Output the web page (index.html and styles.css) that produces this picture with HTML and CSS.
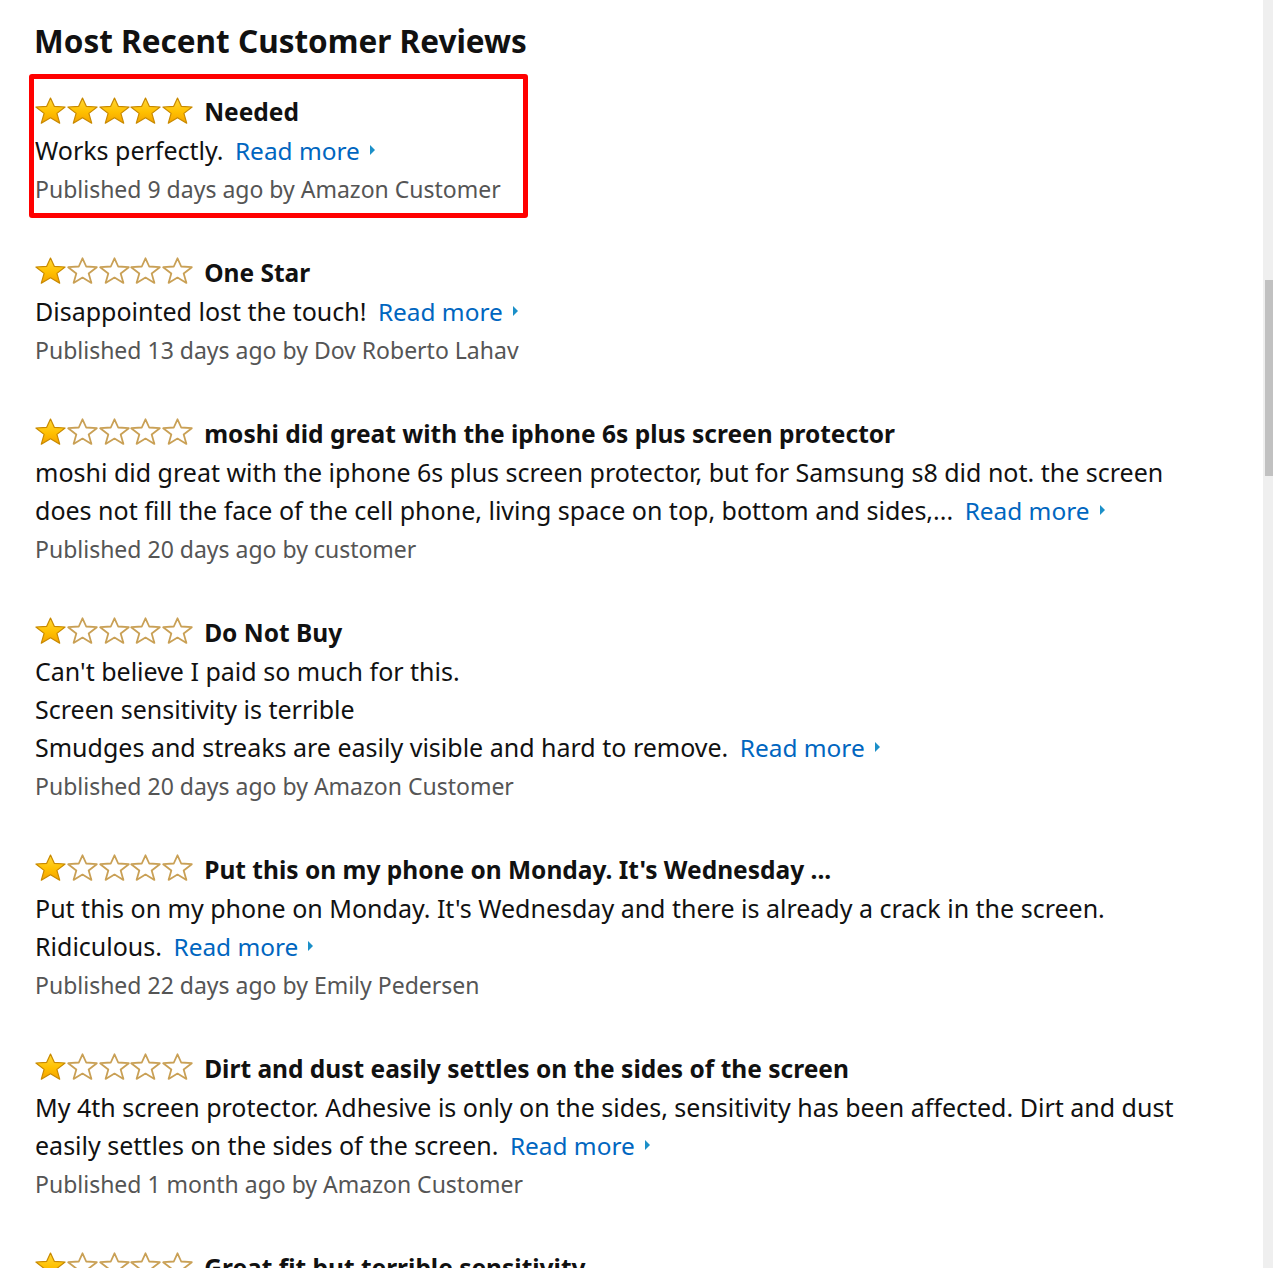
FILE: index.html
```html
<!DOCTYPE html>
<html lang="en">
<head>
<meta charset="utf-8">
<title>Most Recent Customer Reviews</title>
<link rel="stylesheet" href="styles.css">
</head>
<body>
<svg class="defs" width="0" height="0" aria-hidden="true">
  <defs>
    <linearGradient id="gold" x1="0" y1="0" x2="0" y2="1">
      <stop offset="0" stop-color="#ffd83a"/>
      <stop offset="0.55" stop-color="#ffc000"/>
      <stop offset="1" stop-color="#f5a300"/>
    </linearGradient>
    <symbol id="star-full" viewBox="0 0 31 27">
      <path d="M15.5 1 L19.3 9.3 L30.1 10 L21.9 16.4 L24.7 26.2 L15.5 20.7 L6.3 26.2 L9.1 16.4 L0.9 10 L11.7 9.3 Z" fill="url(#gold)" stroke="#c88900" stroke-width="1.2" stroke-linejoin="round"/>
    </symbol>
    <symbol id="star-empty" viewBox="0 0 31 27">
      <path d="M15.5 1.3 L19.2 9.5 L29.8 10.2 L21.7 16.5 L24.4 25.9 L15.5 20.6 L6.6 25.9 L9.3 16.5 L1.2 10.2 L11.8 9.5 Z" fill="#fff" stroke="#c9a055" stroke-width="1.8" stroke-linejoin="round"/>
    </symbol>
  </defs>
</svg>

<main class="page">
  <h2 class="heading">Most Recent Customer Reviews</h2>

  <section class="review review-highlight">
    <div class="review-title-row">
      <span class="stars">
        <svg class="star"><use href="#star-full"/></svg><svg class="star"><use href="#star-full"/></svg><svg class="star"><use href="#star-full"/></svg><svg class="star"><use href="#star-full"/></svg><svg class="star"><use href="#star-full"/></svg>
      </span>
      <span class="review-title">Needed</span>
    </div>
    <p class="review-body">Works perfectly. <a class="read-more" href="#">Read more<span class="caret"></span></a></p>
    <p class="review-meta">Published 9 days ago by Amazon Customer</p>
  </section>

  <section class="review">
    <div class="review-title-row">
      <span class="stars">
        <svg class="star"><use href="#star-full"/></svg><svg class="star"><use href="#star-empty"/></svg><svg class="star"><use href="#star-empty"/></svg><svg class="star"><use href="#star-empty"/></svg><svg class="star"><use href="#star-empty"/></svg>
      </span>
      <span class="review-title">One Star</span>
    </div>
    <p class="review-body">Disappointed lost the touch! <a class="read-more" href="#">Read more<span class="caret"></span></a></p>
    <p class="review-meta">Published 13 days ago by Dov Roberto Lahav</p>
  </section>

  <section class="review">
    <div class="review-title-row">
      <span class="stars">
        <svg class="star"><use href="#star-full"/></svg><svg class="star"><use href="#star-empty"/></svg><svg class="star"><use href="#star-empty"/></svg><svg class="star"><use href="#star-empty"/></svg><svg class="star"><use href="#star-empty"/></svg>
      </span>
      <span class="review-title">moshi did great with the iphone 6s plus screen protector</span>
    </div>
    <p class="review-body">moshi did great with the iphone 6s plus screen protector, but for Samsung s8 did not. the screen does not fill the face of the cell phone, living space on top, bottom and sides,... <a class="read-more" href="#">Read more<span class="caret"></span></a></p>
    <p class="review-meta">Published 20 days ago by customer</p>
  </section>

  <section class="review">
    <div class="review-title-row">
      <span class="stars">
        <svg class="star"><use href="#star-full"/></svg><svg class="star"><use href="#star-empty"/></svg><svg class="star"><use href="#star-empty"/></svg><svg class="star"><use href="#star-empty"/></svg><svg class="star"><use href="#star-empty"/></svg>
      </span>
      <span class="review-title">Do Not Buy</span>
    </div>
    <p class="review-body">Can't believe I paid so much for this.<br>Screen sensitivity is terrible<br>Smudges and streaks are easily visible and hard to remove. <a class="read-more" href="#">Read more<span class="caret"></span></a></p>
    <p class="review-meta">Published 20 days ago by Amazon Customer</p>
  </section>

  <section class="review">
    <div class="review-title-row">
      <span class="stars">
        <svg class="star"><use href="#star-full"/></svg><svg class="star"><use href="#star-empty"/></svg><svg class="star"><use href="#star-empty"/></svg><svg class="star"><use href="#star-empty"/></svg><svg class="star"><use href="#star-empty"/></svg>
      </span>
      <span class="review-title">Put this on my phone on Monday. It's Wednesday ...</span>
    </div>
    <p class="review-body">Put this on my phone on Monday. It's Wednesday and there is already a crack in the screen. Ridiculous. <a class="read-more" href="#">Read more<span class="caret"></span></a></p>
    <p class="review-meta">Published 22 days ago by Emily Pedersen</p>
  </section>

  <section class="review">
    <div class="review-title-row">
      <span class="stars">
        <svg class="star"><use href="#star-full"/></svg><svg class="star"><use href="#star-empty"/></svg><svg class="star"><use href="#star-empty"/></svg><svg class="star"><use href="#star-empty"/></svg><svg class="star"><use href="#star-empty"/></svg>
      </span>
      <span class="review-title">Dirt and dust easily settles on the sides of the screen</span>
    </div>
    <p class="review-body">My 4th screen protector. Adhesive is only on the sides, sensitivity has been affected. Dirt and dust easily settles on the sides of the screen. <a class="read-more" href="#">Read more<span class="caret"></span></a></p>
    <p class="review-meta">Published 1 month ago by Amazon Customer</p>
  </section>

  <section class="review">
    <div class="review-title-row">
      <span class="stars">
        <svg class="star"><use href="#star-full"/></svg><svg class="star"><use href="#star-empty"/></svg><svg class="star"><use href="#star-empty"/></svg><svg class="star"><use href="#star-empty"/></svg><svg class="star"><use href="#star-empty"/></svg>
      </span>
      <span class="review-title">Great fit but terrible sensitivity</span>
    </div>
  </section>
</main>

<div class="scrollbar" aria-hidden="true"><div class="scrollbar-thumb"></div></div>
</body>
</html>
```
FILE: styles.css
```css
html, body {
  margin: 0;
  padding: 0;
  height: 100%;
  overflow: hidden;
  background: #fff;
}

body {
  font-family: "Noto Sans", "Open Sans", Arial, sans-serif;
  color: #111;
}

.defs {
  position: absolute;
  width: 0;
  height: 0;
}

.page {
  padding: 0 0 0 35px;
  width: 1170px;
}

.heading {
  margin: 21px 0 13px -1px;
  font-size: 31.5px;
  line-height: 40px;
  font-weight: 700;
  color: #111;
}

.review {
  margin-bottom: 45px;
}

.review-highlight {
  box-sizing: border-box;
  width: 499px;
  margin-left: -6px;
  margin-bottom: 34.5px;
  padding: 13px 0 5px 1px;
  border: 5px solid #ff0000;
  border-radius: 3px;
}

.review-title-row {
  display: flex;
  align-items: center;
  height: 39px;
}

.stars {
  display: flex;
  gap: 0.8px;
  margin-right: 11px;
  margin-top: -3px;
}

.star {
  width: 31px;
  height: 27px;
  display: block;
}

.review-title {
  font-size: 24.5px;
  line-height: 39px;
  font-weight: 700;
  white-space: nowrap;
  color: #111;
}

.review-body {
  margin: 0;
  font-size: 25px;
  line-height: 38px;
  color: #111;
}

.read-more {
  margin-left: 5px;
  font-size: 24.4px;
  color: #0066c0;
  text-decoration: none;
  white-space: nowrap;
}

.caret {
  display: inline-block;
  width: 0;
  height: 0;
  margin-left: 10px;
  border-top: 5px solid transparent;
  border-bottom: 5px solid transparent;
  border-left: 5px solid #1b8fc8;
  vertical-align: 5px;
}

.review-meta {
  margin: 0;
  font-size: 23px;
  line-height: 38px;
  color: #555;
}

.scrollbar {
  position: fixed;
  top: 0;
  right: 0;
  width: 10px;
  height: 100%;
  background: #efefef;
}

.scrollbar-thumb {
  margin: 280px 0 0 2px;
  width: 8px;
  height: 196px;
  background: #c1c1c1;
}
```
